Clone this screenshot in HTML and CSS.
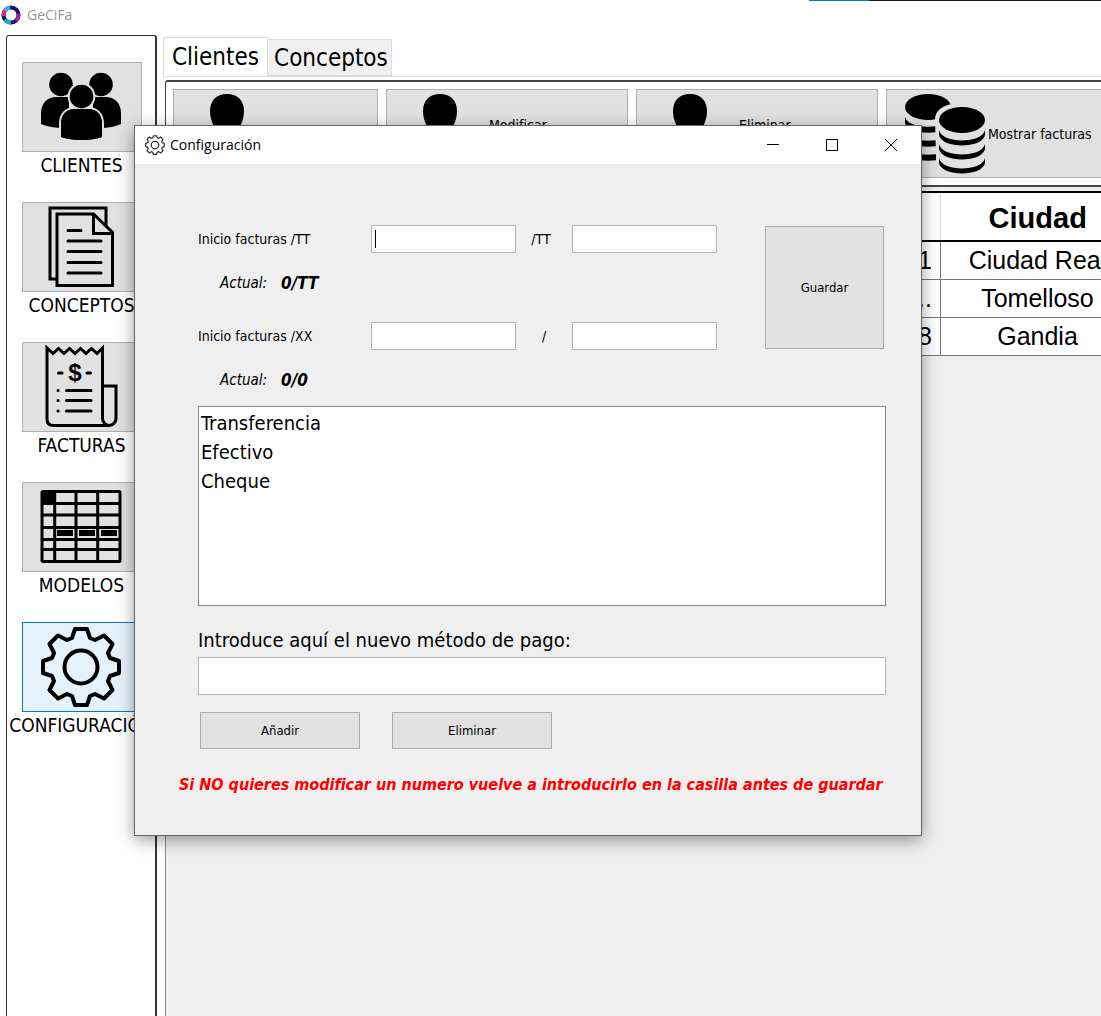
FILE: index.html
```html
<!DOCTYPE html>
<html lang="es">
<head>
<meta charset="utf-8">
<title>GeCiFa</title>
<link rel="stylesheet" href="styles.css">
</head>
<body>
<header class="app-bar">
  <svg class="app-logo" viewBox="0 0 20 20" fill="none" stroke-width="4" aria-hidden="true">
    <circle cx="10" cy="10" r="7.500" stroke="#1c0f6b"/>
    <path d="M2.600 11A7.500 7.500 0 0 1 5 4.500" stroke="#d3298f"/>
    <path d="M4 5.500A7.500 7.500 0 0 1 9 2.600" stroke="#35b4e8"/>
    <path d="M4 14.500A7.500 7.500 0 0 0 10 17.500" stroke="#20a8dc"/>
    <path d="M17.400 9A7.500 7.500 0 0 1 15 15.600" stroke="#a51f9a"/>
  </svg>
  <span>GeCiFa</span>
</header>

<div class="workspace">
  <nav class="sidebar">
    <div class="nav-item">
      <button class="nav-button" type="button" aria-labelledby="nav-clientes">
        <svg class="icon" viewBox="0 0 80 80">
          <circle cx="20" cy="17.500" r="11.800"/><circle cx="60" cy="17.500" r="11.800"/>
          <path d="M0 57V47C0 36 6 30 16 30H28V58L20 61C12 60.500 5 59.500 0 57Z"/>
          <path d="M80 57V47C80 36 74 30 64 30H52V58L62 61C69 60.500 75 59.500 80 57Z"/>
          <g stroke="#e1e1e1" stroke-width="4" paint-order="stroke">
            <path d="M20 70V57C20 47 26 42 34 42H47C55 42 61 47 61 57V70C50 74 31 74 20 70Z"/>
            <circle cx="40.500" cy="29.500" r="11.800"/>
          </g>
          <path d="M20 70V57C20 47 26 42 34 42H47C55 42 61 47 61 57V70C50 74 31 74 20 70Z"/>
        </svg>
      </button>
      <span class="nav-label" id="nav-clientes">CLIENTES</span>
    </div>
    <div class="nav-item">
      <button class="nav-button" type="button" aria-labelledby="nav-conceptos">
        <svg class="icon line" viewBox="0 0 80 80">
          <path d="M15.500 72H9V1H65V19M16 7H52.500L71.500 25.500V78.500H16ZM52.500 7V26.500H71.500"/>
          <path stroke-linecap="round" d="M27 23.500H40M27 34H60M27 44.500H60M27 55.500H60M27 66H60"/>
        </svg>
      </button>
      <span class="nav-label" id="nav-conceptos">CONCEPTOS</span>
    </div>
    <div class="nav-item">
      <button class="nav-button" type="button" aria-labelledby="nav-facturas">
        <svg class="icon line" viewBox="0 0 80 80">
          <path d="M61.500 71V1L56 6.500L50.500 1.500L45 6.500L39.500 1.500L34 6.500L28.500 1.500L23 6.500L17.500 1.500L12 6.500L6 1V72Q6 78.500 12.500 78.500H68.500A7 7 0 0 0 75 71V39H61.500M61.500 71A7 7 0 0 0 68.500 78.500"/>
          <path stroke-linecap="round" d="M17.500 26H21M46 26H49.500M25.500 43.500H50M25.500 53.500H50M25.500 64H50M17 43.500H17.100M17 53.500H17.100M17 64H17.100"/>
          <text class="icon-currency" x="34" y="34">$</text>
        </svg>
      </button>
      <span class="nav-label" id="nav-facturas">FACTURAS</span>
    </div>
    <div class="nav-item">
      <button class="nav-button" type="button" aria-labelledby="nav-modelos">
        <svg class="icon line" viewBox="0 0 80 80">
          <rect x="1" y="4.500" width="78" height="70" rx="1"/>
          <path d="M13.700 4V75M35 4V75M56.700 4V75M1 16.500H79M1 28H79M1 40.500H79M1 52.500H79M1 62.500H79"/>
          <path fill="#000" stroke="none" d="M1 4H14V17H1ZM16 43H32V49H16ZM38 43H54V49H38ZM60 43H76V49H60Z"/>
        </svg>
      </button>
      <span class="nav-label" id="nav-modelos">MODELOS</span>
    </div>
    <div class="nav-item">
      <button class="nav-button active" type="button" aria-labelledby="nav-config">
        <svg class="icon gear" viewBox="-40 -40 80 80">
          <path d="M-9-29L-6-38H6L9-29L14-27L23-31.500L31.500-23L27-14L29-9L38-6V6L29 9L27 14L31.500 23L23 31.500L14 27L9 29L6 38H-6L-9 29L-14 27L-23 31.500L-31.500 23L-27 14L-29 9L-38 6V-6L-29-9L-27-14L-31.500-23L-23-31.500L-14-27Z"/>
          <circle r="16.500"/>
        </svg>
      </button>
      <span class="nav-label" id="nav-config">CONFIGURACIÓN</span>
    </div>
  </nav>

  <main class="content">
    <div class="tabs" role="tablist">
      <button class="tab selected" type="button" role="tab" aria-selected="true">Clientes</button>
      <button class="tab" type="button" role="tab" aria-selected="false">Conceptos</button>
    </div>
    <div class="tab-panel">
      <div class="toolbar">
        <button class="tool narrow" type="button">
          <svg class="icon" viewBox="0 0 80 80"><path d="M40 0C51 0 57 7 57 17C57 28 50 42 40 42S23 28 23 17C23 7 29 0 40 0Z"/></svg>
        </button>
        <button class="tool" type="button">
          <svg class="icon" viewBox="0 0 80 80"><path d="M40 0C51 0 57 7 57 17C57 28 50 42 40 42S23 28 23 17C23 7 29 0 40 0Z"/></svg>
          <span class="tool-caption">Modificar</span>
        </button>
        <button class="tool" type="button">
          <svg class="icon" viewBox="0 0 80 80"><path d="M40 0C51 0 57 7 57 17C57 28 50 42 40 42S23 28 23 17C23 7 29 0 40 0Z"/></svg>
          <span class="tool-caption">Eliminar</span>
        </button>
        <button class="tool invoices" type="button">
          <svg class="icon" viewBox="0 0 80 80">
            <ellipse cx="23" cy="13" rx="23" ry="13"/>
            <path d="M0 23C3 36 43 36 46 23V29C43 42 3 42 0 29ZM0 37C3 50 43 50 46 37V43C43 56 3 56 0 43ZM0 51C3 64 43 64 46 51V57C43 70 3 70 0 57Z"/>
            <path fill="#e1e1e1" d="M30 26C30 2 80 6 84 26V80H31V62Z"/>
            <ellipse cx="57" cy="26" rx="23" ry="13"/>
            <path d="M34 36C37 50 77 50 80 36V41C77 55 37 55 34 41ZM34 50C37 64 77 64 80 50V55C77 69 37 69 34 55ZM34 64C37 78 77 78 80 64V69C77 83 37 83 34 69Z"/>
          </svg>
          <span>Mostrar facturas</span>
        </button>
      </div>
      <div class="table-area">
        <table class="clients">
          <colgroup><col><col class="city-column"></colgroup>
          <thead><tr><th></th><th>Ciudad</th></tr></thead>
          <tbody>
            <tr><td>1</td><td>Ciudad Real</td></tr>
            <tr><td>...</td><td>Tomelloso</td></tr>
            <tr><td>8</td><td>Gandia</td></tr>
          </tbody>
        </table>
      </div>
    </div>
  </main>
</div>

<section class="dialog" role="dialog" aria-labelledby="dialog-title">
  <header class="dialog-bar">
    <svg class="dialog-icon" viewBox="-40 -40 80 80">
      <path d="M-9-29L-6-37H6L9-29L14-27L23-31.500L31.500-23L27-14L29-9L37-6V6L29 9L27 14L31.500 23L23 31.500L14 27L9 29L6 37H-6L-9 29L-14 27L-23 31.500L-31.500 23L-27 14L-29 9L-37 6V-6L-29-9L-27-14L-31.500-23L-23-31.500L-14-27Z"/>
      <circle r="15"/>
    </svg>
    <h1 class="dialog-title" id="dialog-title">Configuración</h1>
    <button class="window-button" type="button" aria-label="Minimizar"><svg viewBox="0 0 12 12"><path d="M0 5.500H12"/></svg></button>
    <button class="window-button" type="button" aria-label="Maximizar"><svg viewBox="0 0 12 12"><path d="M.5.5H11.500V11.500H.5Z"/></svg></button>
    <button class="window-button" type="button" aria-label="Cerrar"><svg viewBox="0 0 12 12"><path d="M0 0L12 12M12 0L0 12"/></svg></button>
  </header>
  <form class="settings">
    <div class="numbering">
      <label for="tt-start">Inicio facturas /TT</label>
      <span class="focused-field"><input id="tt-start" type="text"></span>
      <label class="separator" for="tt-end">/TT</label>
      <input id="tt-end" type="text">
      <button class="push save" type="button">Guardar</button>
      <p class="current">Actual: <strong>0/TT</strong></p>
      <label for="xx-start">Inicio facturas /XX</label>
      <input id="xx-start" type="text">
      <label class="separator slash" for="xx-end">/</label>
      <input id="xx-end" type="text">
      <p class="current">Actual: <strong>0/0</strong></p>
    </div>
    <ul class="methods">
      <li>Transferencia</li>
      <li>Efectivo</li>
      <li>Cheque</li>
    </ul>
    <label class="method-label" for="method">Introduce aquí el nuevo método de pago:</label>
    <input class="method-input" id="method" type="text">
    <div class="actions">
      <button class="push" type="button">Añadir</button>
      <button class="push" type="button">Eliminar</button>
    </div>
    <p class="warning">Si NO quieres modificar un numero vuelve a introducirlo en la casilla antes de guardar</p>
  </form>
</section>
</body>
</html>
```
FILE: styles.css
```css
* { box-sizing: border-box; }

body {
  margin: 0;
  height: 100vh;
  display: flex;
  flex-direction: column;
  overflow: hidden;
  background: #fff;
  color: #000;
  font-family: "DejaVu Sans Condensed", "Noto Sans", sans-serif;
  font-size: 13px;
}

button, input { font: inherit; color: inherit; border-radius: 0; }
button { padding: 0; }

.app-bar {
  flex: none;
  height: 35px;
  padding: 0 0 6px 1px;
  display: flex;
  align-items: center;
  gap: 6px;
  color: #999;
  font-family: "Open Sans", sans-serif;
  font-size: 14px;
}
.app-bar::after {
  content: "";
  position: absolute;
  top: 0;
  right: 0;
  width: 292px;
  height: 1px;
  background: linear-gradient(90deg, #0078d7 60px, #1b1b1b 60px);
}
.app-logo { width: 20px; height: 20px; }

.workspace { flex: 1; min-height: 0; display: flex; gap: 6px; padding-left: 6px; }

.sidebar {
  flex: none;
  width: 151px;
  padding: 26px 0 0 1px;
  border: 1px solid #333;
  border-width: 1px 2px 0 1px;
  border-radius: 3px 3px 0 0;
  display: flex;
  flex-direction: column;
  gap: 20px;
}
.nav-item {
  height: 120px;
  display: flex;
  flex-direction: column;
  align-items: center;
}
.nav-button {
  flex: none;
  width: 120px;
  height: 90px;
  padding-right: 2px;
  display: grid;
  place-items: center;
  background: #e1e1e1;
  border: 1px solid #adadad;
}
.nav-button.active { background: #e5f1fb; border-color: #0078d7; }
.nav-label { font-size: 19px; line-height: 26px; white-space: nowrap; }

.icon { flex: none; display: block; width: 80px; height: 80px; overflow: visible; }
.line { fill: none; stroke: #000; stroke-width: 3px; }
.gear { fill: none; stroke: #000; stroke-width: 4px; stroke-linejoin: round; }
.icon-currency {
  fill: #000;
  stroke: none;
  font-family: "Liberation Sans", sans-serif;
  font-size: 24px;
  font-weight: bold;
  text-anchor: middle;
}

.content { flex: 1; min-width: 0; display: flex; flex-direction: column; }
.tabs { flex: none; height: 41px; padding-top: 2px; display: flex; align-items: flex-end; }
.tab {
  height: 37px;
  padding: 0 3px 0 6px;
  background: #f0f0f0;
  border: 1px solid #dcdcdc;
  border-left: 0;
  font-size: 24px;
}
.tab.selected { height: 39px; padding: 0 8px; background: #fff; border: 1px solid #dcdcdc; border-bottom: 0; }

.tab-panel {
  flex: 1;
  min-height: 0;
  padding: 3px 0 0 2px;
  border-top: 1px solid #dcdcdc;
  display: flex;
  flex-direction: column;
}
.toolbar {
  flex: none;
  height: 107px;
  padding: 7px 0 7px 7px;
  border: 1px solid #444;
  border-width: 2px 0 2px 1px;
  border-radius: 3px 0 0 0;
  display: flex;
  gap: 8px;
}
.tool {
  flex: none;
  width: 242px;
  padding-left: 13px;
  display: flex;
  align-items: center;
  gap: 9px;
  background: #e1e1e1;
  border: 1px solid #adadad;
  font-size: 14px;
}
.tool.narrow { width: 205px; }
.tool.invoices { width: 223px; padding-left: 18px; gap: 3px; white-space: nowrap; }
.tool-caption { padding-bottom: 18px; }

.table-area {
  flex: 1;
  min-height: 0;
  padding-top: 4px;
  border-left: 1px solid #8a8a8a;
  background: #efefef;
}
.clients {
  width: calc(100% + 34px);
  table-layout: fixed;
  border-collapse: collapse;
  background: #fff;
  font-family: "Liberation Sans", sans-serif;
  font-size: 25px;
  text-align: center;
}
.city-column { width: 194px; }
.clients th {
  height: 49px;
  padding: 4px 0 0;
  border: solid #000;
  border-width: 2px 0;
  font-size: 29px;
}
.clients th:first-child { border-right: 1px solid #ddd; }
.clients td {
  height: 38px;
  padding: 0;
  border: 1px solid #777;
}
.clients td:first-child { padding-right: 8px; text-align: right; }

/* Settings window floating over the workspace */
.dialog {
  position: absolute;
  top: 125px;
  left: 134px;
  width: 788px;
  border: 1px solid #666;
  background: #efefef;
  box-shadow: 0 4px 16px rgba(0, 0, 0, .4);
}
.dialog-bar {
  height: 38px;
  padding: 0 1px 0 10px;
  display: flex;
  align-items: center;
  background: #fff;
}
.dialog-icon { width: 20px; height: 20px; fill: none; stroke: #333; stroke-width: 5px; }
.dialog-title {
  flex: 1;
  margin: 0 0 0 5px;
  font-family: "Open Sans", sans-serif;
  font-size: 14px;
  font-weight: normal;
  line-height: 18px;
}
.window-button {
  width: 59px;
  height: 38px;
  display: grid;
  place-items: center;
  background: none;
  border: 0;
}
.window-button svg { width: 12px; height: 12px; fill: none; stroke: #000; stroke-width: 1px; }

.settings { padding: 61px 35px 38px 63px; }
.numbering {
  display: grid;
  grid-template-columns: 173px 145px 56px 145px 1fr;
  grid-template-rows: 28px 69px 28px 56px;
}
.numbering label { font-size: 14px; line-height: 28px; }
.numbering .separator { text-align: center; padding-right: 6px; }
.numbering .slash { padding: 0; }
.numbering input, .method-input {
  width: 100%;
  height: 28px;
  padding: 0 4px;
  background: #fff;
  border: 1px solid #b4b4b9;
  outline: 0;
}
.focused-field { position: relative; }
.focused-field::after {
  content: "";
  position: absolute;
  top: 5px;
  left: 4px;
  width: 1px;
  height: 18px;
  background: #000;
}
.current {
  grid-column: 1 / 5;
  margin: 0;
  padding: 18px 0 0 22px;
  display: flex;
  gap: 14px;
  font-size: 15px;
  line-height: 24px;
  font-style: italic;
}
.current strong { font-size: 17px; }
.push { background: #e1e1e1; border: 1px solid #adadad; }
.save {
  grid-column: 5;
  grid-row: 1 / 4;
  justify-self: end;
  width: 119px;
  margin: 1px 2px 1px 0;
}

.methods {
  height: 200px;
  margin: 0;
  padding: 2px;
  list-style: none;
  background: #fff;
  border: 1px solid #828790;
  font-size: 20px;
  line-height: 29px;
}
.method-label { display: block; padding-top: 18px; font-size: 20px; line-height: 33px; }
.method-input { display: block; height: 38px; font-size: 20px; }
.actions { display: flex; gap: 32px; padding: 17px 0 0 2px; }
.actions .push { width: 160px; height: 37px; }
.warning {
  margin: 24px 0 0 -19px;
  color: #f00;
  font-size: 16px;
  font-weight: bold;
  font-style: italic;
  line-height: 24px;
  white-space: nowrap;
}
```
